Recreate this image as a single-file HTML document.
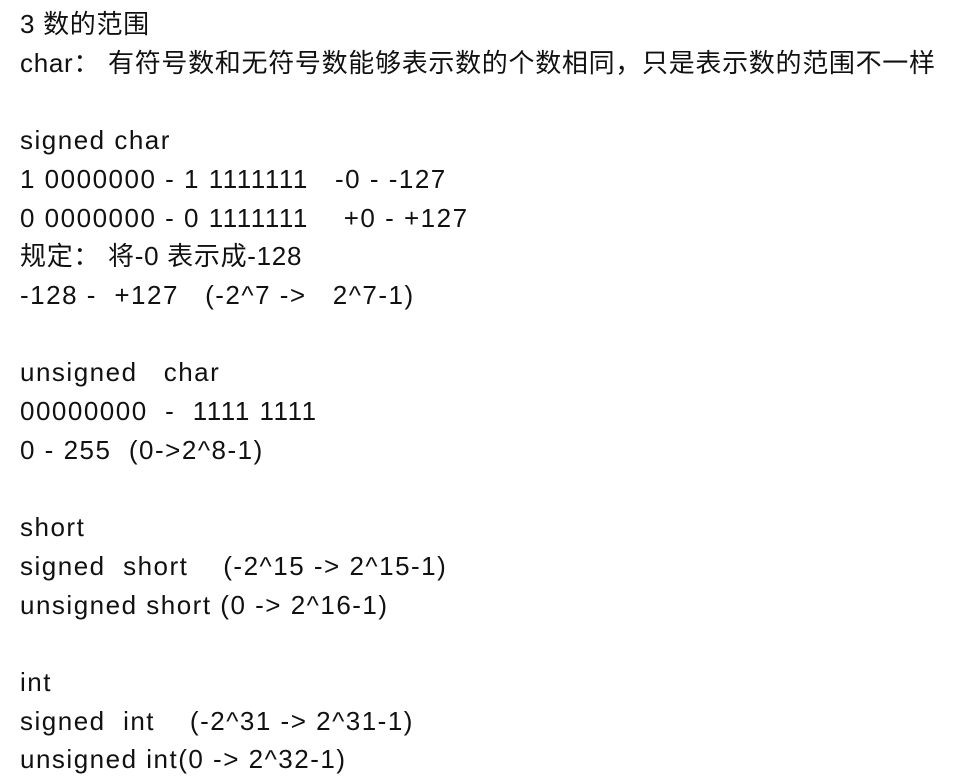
<!DOCTYPE html>
<html><head><meta charset="utf-8"><style>
html,body{margin:0;padding:0;background:#fff;width:966px;height:777px;overflow:hidden}
pre{margin:0;position:absolute;left:20px;top:5px;font-family:"Liberation Sans","Noto Sans CJK SC",sans-serif;font-size:26px;line-height:38.7px;color:#111;white-space:pre;letter-spacing:1.5px}
.c{letter-spacing:0.7px}
</style></head><body><pre><span class="c">3 数的范围</span>
<span class="c">char： 有符号数和无符号数能够表示数的个数相同，只是表示数的范围不一样</span>

signed char
1 0000000 - 1 1111111   -0 - -127
0 0000000 - 0 1111111    +0 - +127
<span class="c">规定： 将-0 表示成-128</span>
-128 -  +127   (-2^7 ->   2^7-1)

unsigned   char
00000000  -  1111 1111
0 - 255  (0->2^8-1)

short
signed  short    (-2^15 -> 2^15-1)
unsigned short (0 -> 2^16-1)

int
signed  int    (-2^31 -> 2^31-1)
unsigned int(0 -> 2^32-1)</pre></body></html>
